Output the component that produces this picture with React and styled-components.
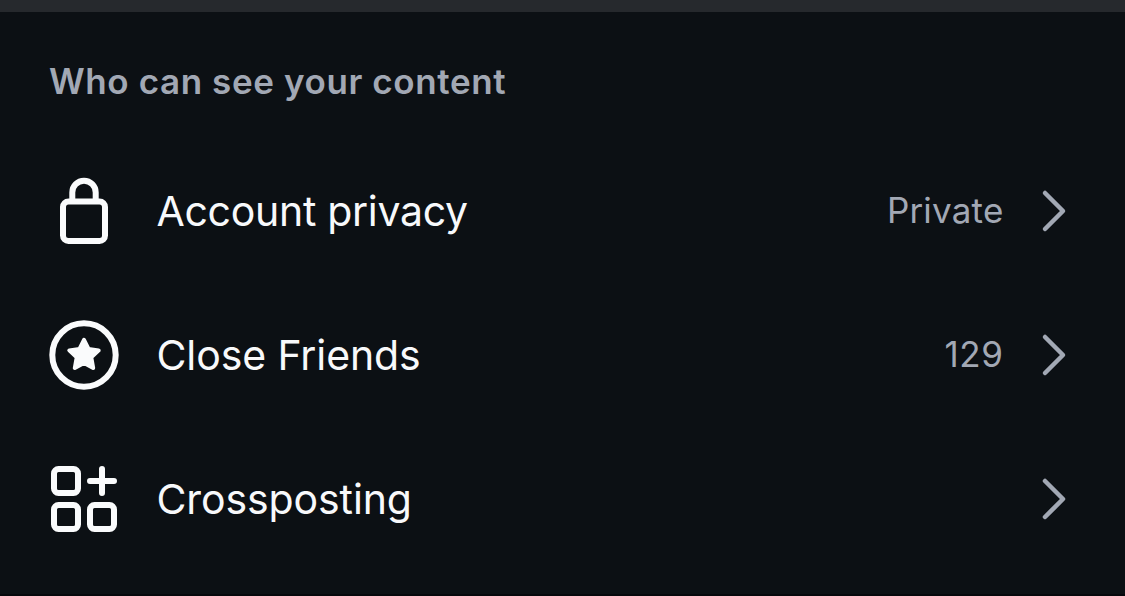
import React from "react";
import styled, { createGlobalStyle } from "styled-components";

const GlobalStyle = createGlobalStyle`
  body {
    margin: 0;
    background: #0c1014;
    font-family: Inter, "Liberation Sans", sans-serif;
  }
`;

const Screen = styled.main`
  box-sizing: border-box;
  height: 596px;
  overflow: hidden;
  background: #0c1014;
  border-top: 12px solid #26292d;
  border-bottom: 2px solid #06080c;
`;

const Heading = styled.h2`
  margin: 0;
  padding: 47px 49px 0;
  height: 80px;
  font-size: 35px;
  line-height: 44px;
  font-weight: 600;
  letter-spacing: 0.6px;
  color: #a2a8b4;
  white-space: nowrap;
`;

const List = styled.ul`
  margin: 0;
  padding: 0;
  list-style: none;
`;

const Row = styled.li`
  display: flex;
  align-items: center;
  height: 144px;
  padding: 0 54px 0 48px;
`;

const Icon = styled.svg`
  flex: none;
  width: 72px;
  height: 72px;
  margin-right: 36.5px;
  fill: none;
  stroke: #fafbfc;
  stroke-width: 6;
  stroke-linecap: round;
  stroke-linejoin: round;
`;

const Label = styled.span`
  flex: 1;
  font-size: 41px;
  line-height: 52px;
  letter-spacing: ${(p) => p.$tracking};
  color: #f8f9fb;
  white-space: nowrap;
`;

const Value = styled.span`
  padding-bottom: 2px;
  font-size: 35px;
  line-height: 44px;
  letter-spacing: ${(p) => p.$tracking};
  color: #a2a8b4;
`;

const Chevron = styled.svg`
  flex: none;
  width: 36px;
  height: 48px;
  margin-left: 31.5px;
  fill: none;
  stroke: #a2a8b4;
  stroke-width: 4.5;
  stroke-linecap: round;
  stroke-linejoin: round;
`;

const LockIcon = () => (
  <Icon viewBox="0 0 72 72">
    <rect x="15" y="26.5" width="42" height="39.5" rx="5.5" />
    <path d="M24.3 26V17.4a11.7 11.7 0 0 1 23.4 0V26" />
  </Icon>
);

const StarIcon = () => (
  <Icon viewBox="0 0 72 72">
    <circle cx="36" cy="36" r="31.7" />
    <path
      d="M36 20.8l4.5 9.2 10.2 1.4-7.4 7 1.9 10.6-9.2-5-9.2 5 1.9-10.6-7.4-7 10.2-1.4z"
      fill="#fafbfc"
      strokeWidth="4"
    />
  </Icon>
);

const GridPlusIcon = () => (
  <Icon viewBox="0 0 72 72">
    <rect x="6" y="6" width="24" height="24" rx="4.5" />
    <rect x="6" y="42" width="24" height="24" rx="4.5" />
    <rect x="42" y="42" width="24" height="24" rx="4.5" />
    <path d="M42 18h24M54 6v24" />
  </Icon>
);

const items = [
  { label: "Account privacy", value: "Private", icon: LockIcon, tracking: "-0.3px", valueTracking: "0.2px" },
  { label: "Close Friends", value: "129", icon: StarIcon, tracking: "-0.1px", valueTracking: "0.6px" },
  { label: "Crossposting", icon: GridPlusIcon, tracking: "-0.1px" },
];

export default function App() {
  return (
    <Screen>
      <GlobalStyle />
      <Heading>Who can see your content</Heading>
      <List>
        {items.map(({ label, value, icon: ItemIcon, tracking, valueTracking }) => (
          <Row key={label}>
            <ItemIcon />
            <Label $tracking={tracking}>{label}</Label>
            {value && <Value $tracking={valueTracking}>{value}</Value>}
            <Chevron viewBox="0 0 36 48">
              <path d="M10 6l18 18-18 18" />
            </Chevron>
          </Row>
        ))}
      </List>
    </Screen>
  );
}
